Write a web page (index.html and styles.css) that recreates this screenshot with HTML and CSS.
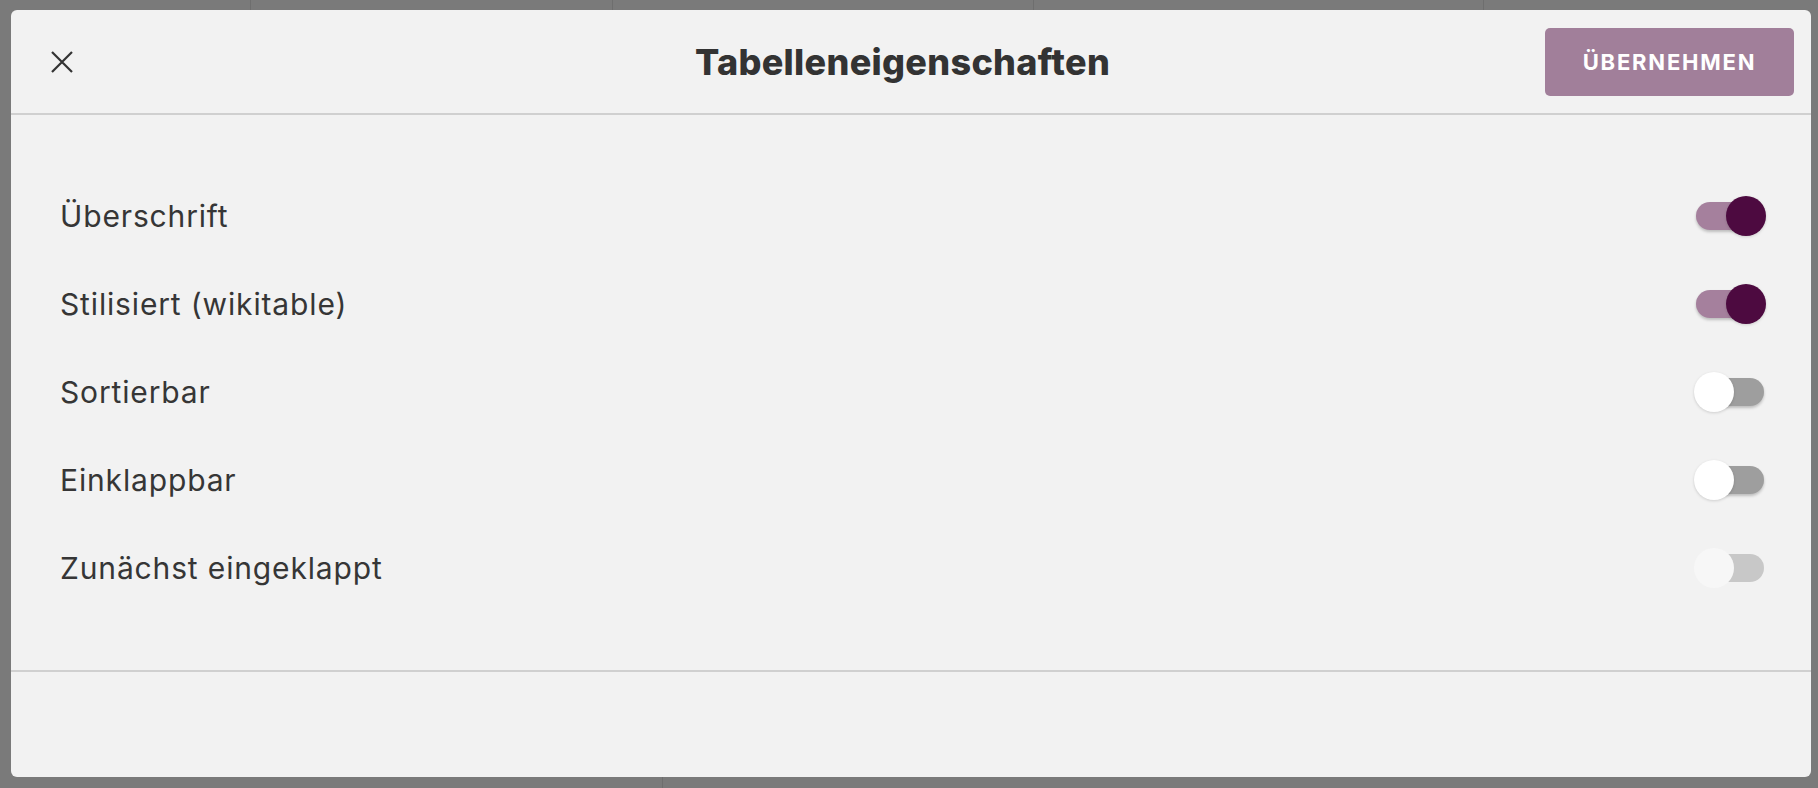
FILE: index.html
```html
<!DOCTYPE html>
<html lang="de">
<head>
    <meta charset="UTF-8">
    <meta name="viewport" content="width=device-width, initial-scale=1.0">
    <title>Tabelleneigenschaften</title>
    <link rel="stylesheet" href="styles.css">
</head>

<body>
    <div class="dialog">
        <div class="dialog-header">
            <button class="close-button" aria-label="Schließen">
                <svg width="22" height="22" viewBox="0 0 22 22">
                    <path d="M1 1 L21 21 M21 1 L1 21" stroke="#333" stroke-width="2.2" fill="none"/>
                </svg>
            </button>
            <h1 class="dialog-title">Tabelleneigenschaften</h1>
            <button class="apply-button">Übernehmen</button>
        </div>

        <div class="dialog-body">
            <div class="option-row">
                <span class="option-label">Überschrift</span>
                <span class="switch on"><span class="track"></span><span class="knob"></span></span>
            </div>
            <div class="option-row">
                <span class="option-label">Stilisiert (wikitable)</span>
                <span class="switch on"><span class="track"></span><span class="knob"></span></span>
            </div>
            <div class="option-row">
                <span class="option-label">Sortierbar</span>
                <span class="switch"><span class="track"></span><span class="knob"></span></span>
            </div>
            <div class="option-row">
                <span class="option-label">Einklappbar</span>
                <span class="switch"><span class="track"></span><span class="knob"></span></span>
            </div>
            <div class="option-row">
                <span class="option-label">Zunächst eingeklappt</span>
                <span class="switch disabled"><span class="track"></span><span class="knob"></span></span>
            </div>
        </div>

        <div class="dialog-footer"></div>
    </div>
</body>
</html>
```

FILE: styles.css
```css
html, body {
    height: 100%;
}

body {
    margin: 0;
    box-sizing: border-box;
    padding: 10px 7px 11px 11px;
    background-color: #7a7a7a;
    background-image:
        linear-gradient(#6e6e6e, #6e6e6e),
        linear-gradient(#6e6e6e, #6e6e6e),
        linear-gradient(#6e6e6e, #6e6e6e),
        linear-gradient(#6e6e6e, #6e6e6e),
        linear-gradient(#6e6e6e, #6e6e6e);
    background-size: 1px 10px, 1px 10px, 1px 10px, 1px 10px, 1px 12px;
    background-position: 250px 0, 612px 0, 1033px 0, 1483px 0, 662px 777px;
    background-repeat: no-repeat;
    font-family: Inter, "Noto Sans", sans-serif;
    color: #333;
}

.dialog {
    display: flex;
    flex-direction: column;
    height: 100%;
    background: #f2f2f2;
    border-radius: 6px;
    overflow: hidden;
}

.dialog-header {
    display: grid;
    grid-template-columns: 1fr auto 1fr;
    align-items: center;
    height: 103px;
    padding: 0 17px 0 40px;
    border-bottom: 2px solid #d0d0d0;
}

.close-button {
    justify-self: start;
    display: flex;
    padding: 0;
    border: none;
    background: none;
    cursor: pointer;
}

.dialog-title {
    margin: 0;
    padding-right: 40px;
    font-size: 36px;
    font-weight: 800;
    letter-spacing: 0.3px;
    color: #333;
}

.apply-button {
    justify-self: end;
    width: 249px;
    height: 68px;
    border: none;
    border-radius: 5px;
    background-color: #a17f9a;
    color: #fff;
    font-family: Inter, sans-serif;
    font-size: 22px;
    font-weight: 700;
    letter-spacing: 1.8px;
    text-transform: uppercase;
    cursor: pointer;
}

.dialog-body {
    display: flex;
    flex-direction: column;
    padding: 57px 45px 58px 49px;
}

.option-row {
    display: flex;
    align-items: center;
    justify-content: space-between;
    height: 88px;
}

.option-label {
    font-size: 30px;
    letter-spacing: 0.85px;
    color: #363636;
}

.switch {
    position: relative;
    display: flex;
    align-items: center;
    width: 72px;
    height: 40px;
}

.track {
    width: 68px;
    height: 28px;
    margin: 0 2px;
    border-radius: 14px;
    background-color: #9e9e9e;
    box-shadow: 0 2px 3px rgba(0, 0, 0, 0.22);
}

.knob {
    position: absolute;
    top: 0;
    left: 0;
    width: 40px;
    height: 40px;
    border-radius: 50%;
    background-color: #fff;
    box-shadow: 0 1px 3px rgba(0, 0, 0, 0.15);
}

.switch.on .track {
    background-color: #a5809d;
}

.switch.on .knob {
    left: 32px;
    background-color: #4d0a40;
}

.switch.disabled .track {
    background-color: #c8c8c8;
    box-shadow: none;
}

.switch.disabled .knob {
    background-color: #f7f7f7;
    box-shadow: none;
}

.dialog-footer {
    flex: 1;
    border-top: 2px solid #d0d0d0;
}
```
